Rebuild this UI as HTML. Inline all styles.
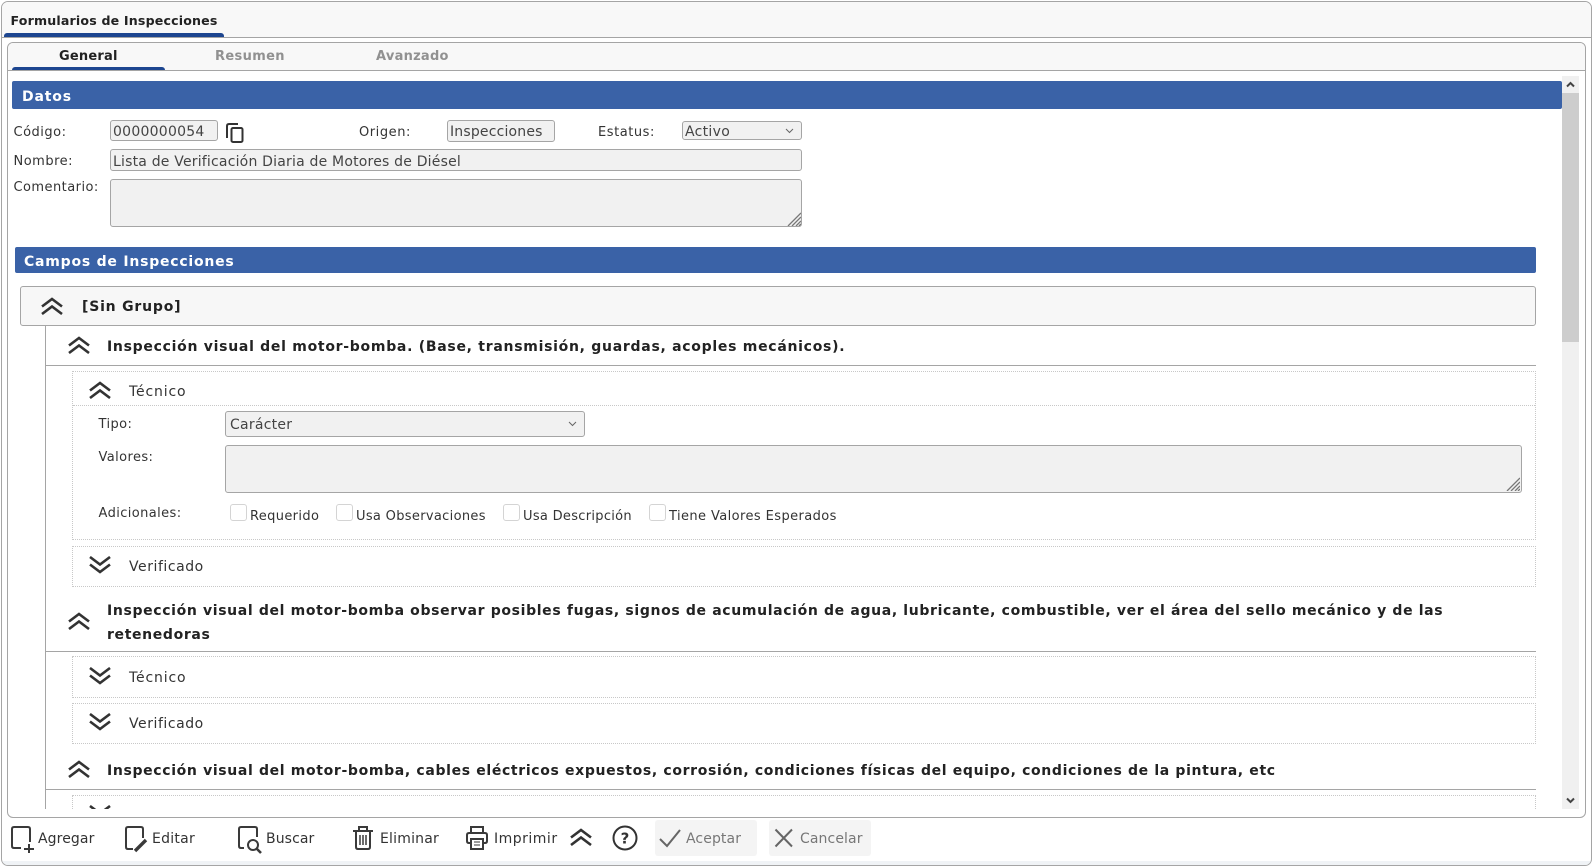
<!DOCTYPE html>
<html lang="es"><head><meta charset="utf-8"><title>Formularios de Inspecciones</title>
<style>
html,body{margin:0;padding:0;width:1593px;height:867px;overflow:hidden;background:#fff}
body{font-family:"DejaVu Sans",sans-serif;font-size:13px;color:#333;position:relative}
.a{position:absolute;box-sizing:border-box}
.t{position:absolute;white-space:nowrap;line-height:20px;height:20px;letter-spacing:.4px}
.b{font-weight:bold;color:#222}
.k{font-size:14px;letter-spacing:.1px}
.f{position:absolute;box-sizing:border-box;background:#f1f1f1;border:1px solid #a5a5a5;border-radius:3px;color:#444;font-size:14px;line-height:23px;padding-left:2px;white-space:nowrap;letter-spacing:.18px;overflow:hidden}
.d{position:absolute;box-sizing:border-box;border:1px dotted #c8c8c8;background:#fff}
.h{position:absolute;height:1px;background:#a5a5a5}
.bar{position:absolute;box-sizing:border-box;background:#3a62a7;color:#fff;font-weight:bold;border-radius:2px;white-space:nowrap}
svg{position:absolute;overflow:visible}
.ci{fill:none;stroke:#333;stroke-width:2.6}
.ic{fill:none;stroke:#3a3a3a;stroke-width:2}
.cb{position:absolute;box-sizing:border-box;width:17px;height:17px;border:1px solid #d4d4d4;border-radius:3px;background:#fff}
.rs{position:absolute;width:14px;height:14px}
</style></head><body>
<svg width="0" height="0" style="position:absolute"><defs>
<symbol id="up" viewBox="0 0 22 18"><path class="ci" d="M1 9.5 11 2 21 9.5M1 17 11 9.5 21 17"/></symbol>
<symbol id="dn" viewBox="0 0 22 18"><path class="ci" d="M1 1 11 8.5 21 1M1 8.5 11 16 21 8.5"/></symbol>
<symbol id="rz" viewBox="0 0 14 14"><path d="M1 14 14 1M5 14 14 5M9 14 14 9M12 14 14 12" fill="none" stroke="#777" stroke-width="1.3"/></symbol>
</defs></svg>

<!-- outer -->
<div class="a" style="left:1px;top:1px;width:1591px;height:865px;border:1px solid #a5a5a5;border-radius:7px;background:#fff;overflow:hidden">
  <div class="a" style="left:0;top:0;width:100%;height:36px;background:#f8f8f8;border-bottom:1px solid #a5a5a5"></div>
  <div class="a" style="left:0;bottom:0;width:100%;height:4px;background:#f0f3f6"></div>
</div>
<div class="t b" style="left:10.5px;top:11px;font-size:12.6px;letter-spacing:.17px">Formularios de Inspecciones</div>
<div class="a" style="left:4px;top:33px;width:220px;height:4px;background:#1d4690;border-radius:3px 3px 0 0"></div>

<!-- inner -->
<div class="a" style="left:7px;top:42px;width:1579px;height:776px;border:1px solid #a5a5a5;border-radius:6px;background:#fff;overflow:hidden">
  <div class="a" style="left:0;top:0;width:100%;height:28px;background:#f8f8f8;border-bottom:1px solid #a5a5a5"></div>
</div>
<div class="t b" style="left:59px;top:47px;font-size:13px;letter-spacing:.2px">General</div>
<div class="t b" style="left:215px;top:47px;font-size:13px;color:#919191;letter-spacing:.35px">Resumen</div>
<div class="t b" style="left:376px;top:47px;font-size:13px;color:#919191;letter-spacing:.25px">Avanzado</div>
<div class="a" style="left:12px;top:67px;width:153px;height:3px;background:#1d4690;border-radius:3px 3px 0 0"></div>

<!-- scrollbar -->
<div class="a" style="left:1562px;top:76px;width:17px;height:733px;background:#f0f0f0"></div>
<div class="a" style="left:1562px;top:93px;width:17px;height:249px;background:#cdcdcd"></div>
<svg style="left:1566px;top:81px" width="9" height="7"><path d="M1 5.5 4.5 2 8 5.5" fill="none" stroke="#444" stroke-width="2"/></svg>
<svg style="left:1566px;top:797px" width="9" height="7"><path d="M1 1.5 4.5 5 8 1.5" fill="none" stroke="#444" stroke-width="2"/></svg>

<!-- Datos -->
<div class="bar" style="left:12px;top:81px;width:1550px;height:28px;padding-left:10px;line-height:32px;font-size:14px;letter-spacing:.85px">Datos</div>
<div class="t" style="left:13.5px;top:123px;letter-spacing:.5px">Código:</div>
<div class="f" style="left:110px;top:120px;width:108px;height:21px;letter-spacing:.25px">0000000054</div>
<svg style="left:226px;top:123px" width="18" height="20" viewBox="0 0 18 20"><path d="M12 1H3Q1 1 1 3V15" fill="none" stroke="#333" stroke-width="2"/><rect x="5.5" y="5" width="11" height="14" rx="1.5" fill="none" stroke="#333" stroke-width="2"/></svg>
<div class="t" style="left:359px;top:123px;letter-spacing:.55px">Origen:</div>
<div class="f" style="left:447px;top:120px;width:108px;height:22px">Inspecciones</div>
<div class="t" style="left:598px;top:123px;letter-spacing:.55px">Estatus:</div>
<div class="f" style="left:682px;top:121px;width:120px;height:19px;line-height:21px;letter-spacing:.3px">Activo</div>
<svg style="left:785px;top:128px" width="9" height="6"><path d="M1 1 4.5 4.5 8 1" fill="none" stroke="#666" stroke-width="1"/></svg>
<div class="t" style="left:13.5px;top:152px;letter-spacing:.5px">Nombre:</div>
<div class="f" style="left:110px;top:149px;width:692px;height:22px;line-height:25px;letter-spacing:.2px">Lista de Verificación Diaria de Motores de Diésel</div>
<div class="t" style="left:13.5px;top:178px;letter-spacing:.45px">Comentario:</div>
<div class="f" style="left:110px;top:179px;width:692px;height:48px"></div>
<svg class="rs" style="left:787px;top:212px"><use href="#rz"/></svg>

<!-- Campos -->
<div class="bar" style="left:15px;top:247px;width:1521px;height:26px;padding-left:9px;line-height:30px;font-size:14px;letter-spacing:.78px">Campos de Inspecciones</div>
<div class="a" style="left:20px;top:286px;width:1516px;height:40px;background:#f7f7f7;border:1px solid #a5a5a5;border-radius:3px"></div>
<svg style="left:41px;top:297px" width="22" height="18"><use href="#up"/></svg>
<div class="t b" style="left:82px;top:297px;font-size:14px;letter-spacing:.8px">[Sin Grupo]</div>

<div class="a" style="left:45px;top:326px;width:1px;height:483px;background:#a5a5a5"></div>

<!-- Item 1 -->
<svg style="left:68px;top:336px" width="22" height="18"><use href="#up"/></svg>
<div class="t b" style="left:107px;top:337px;font-size:14px;letter-spacing:.72px">Inspección visual del motor-bomba. (Base, transmisión, guardas, acoples mecánicos).</div>
<div class="h" style="left:45px;top:365px;width:1491px"></div>

<div class="d" style="left:72px;top:371px;width:1464px;height:169px"></div>
<div class="a" style="left:73px;top:405px;width:1462px;border-top:1px dotted #c8c8c8"></div>
<svg style="left:89px;top:381px" width="22" height="18"><use href="#up"/></svg>
<div class="t" style="left:129px;top:382px;font-size:14px;letter-spacing:.85px">Técnico</div>
<div class="t" style="left:98.5px;top:415px">Tipo:</div>
<div class="f" style="left:225px;top:411px;width:360px;height:26px;line-height:27px;padding-left:4px;letter-spacing:.25px">Carácter</div>
<svg style="left:568px;top:421px" width="9" height="6"><path d="M1 1 4.5 4.5 8 1" fill="none" stroke="#666" stroke-width="1"/></svg>
<div class="t" style="left:98.5px;top:448px">Valores:</div>
<div class="f" style="left:225px;top:445px;width:1297px;height:48px"></div>
<svg class="rs" style="left:1506px;top:477px"><use href="#rz"/></svg>
<div class="t" style="left:98.5px;top:504px">Adicionales:</div>
<div class="cb" style="left:230px;top:504px"></div>
<div class="t" style="left:250px;top:507px;letter-spacing:.35px">Requerido</div>
<div class="cb" style="left:336px;top:504px"></div>
<div class="t" style="left:356px;top:507px;letter-spacing:.32px">Usa Observaciones</div>
<div class="cb" style="left:503px;top:504px"></div>
<div class="t" style="left:523px;top:507px;letter-spacing:.3px">Usa Descripción</div>
<div class="cb" style="left:649px;top:504px"></div>
<div class="t" style="left:669px;top:507px;letter-spacing:.41px">Tiene Valores Esperados</div>

<div class="d" style="left:72px;top:546px;width:1464px;height:41px"></div>
<svg style="left:89px;top:556px" width="22" height="18"><use href="#dn"/></svg>
<div class="t" style="left:129px;top:557px;font-size:14px;letter-spacing:.55px">Verificado</div>

<!-- Item 2 -->
<svg style="left:68px;top:612px" width="22" height="18"><use href="#up"/></svg>
<div class="t b" style="left:107px;top:601px;font-size:14px;letter-spacing:.646px">Inspección visual del motor-bomba observar posibles fugas, signos de acumulación de agua, lubricante, combustible, ver el área del sello mecánico y de las</div>
<div class="t b" style="left:107px;top:625px;font-size:14px;letter-spacing:.646px">retenedoras</div>
<div class="h" style="left:45px;top:651px;width:1491px"></div>
<div class="d" style="left:72px;top:656px;width:1464px;height:42px"></div>
<svg style="left:89px;top:667px" width="22" height="18"><use href="#dn"/></svg>
<div class="t" style="left:129px;top:668px;font-size:14px;letter-spacing:.85px">Técnico</div>
<div class="d" style="left:72px;top:703px;width:1464px;height:41px"></div>
<svg style="left:89px;top:713px" width="22" height="18"><use href="#dn"/></svg>
<div class="t" style="left:129px;top:714px;font-size:14px;letter-spacing:.55px">Verificado</div>

<!-- Item 3 -->
<svg style="left:68px;top:760px" width="22" height="18"><use href="#up"/></svg>
<div class="t b" style="left:107px;top:761px;font-size:14px;letter-spacing:.653px">Inspección visual del motor-bomba, cables eléctricos expuestos, corrosión, condiciones físicas del equipo, condiciones de la pintura, etc</div>
<div class="h" style="left:45px;top:789px;width:1491px"></div>
<div class="a" style="left:72px;top:795px;width:1464px;height:14px;border:1px dotted #c8c8c8;border-bottom:0"></div>
<div class="a" style="left:89px;top:805px;width:22px;height:4px;overflow:hidden"><svg style="left:0;top:0" width="22" height="18"><use href="#dn"/></svg></div>

<!-- footer -->
<svg style="left:10px;top:825px" width="25" height="28" viewBox="0 0 25 28"><path class="ic" d="M11 23H4Q2 23 2 21V4Q2 2 4 2H18Q20 2 20 4V17"/><path d="M14 24H24M19 19V28" fill="none" stroke="#3a3a3a" stroke-width="2"/></svg>
<div class="t k" style="left:38px;top:829px">Agregar</div>
<svg style="left:124px;top:825px" width="25" height="28" viewBox="0 0 25 28"><path class="ic" d="M9 24H4Q2 24 2 22V4Q2 2 4 2H17Q19 2 19 4V13"/><path d="M11 26 22 15" fill="none" stroke="#3a3a3a" stroke-width="3.4"/></svg>
<div class="t k" style="left:152px;top:829px;letter-spacing:.25px">Editar</div>
<svg style="left:238px;top:825px" width="25" height="28" viewBox="0 0 25 28"><path class="ic" d="M6 23H3Q1 23 1 21V4Q1 2 3 2H17Q19 2 19 4V12"/><circle cx="15" cy="20" r="5" class="ic" stroke-width="2"/><path d="M19 24 23 28" fill="none" stroke="#3a3a3a" stroke-width="2.6"/></svg>
<div class="t k" style="left:266px;top:829px">Buscar</div>
<svg style="left:352px;top:825px" width="22" height="26" viewBox="0 0 22 26"><path class="ic" d="M1 6H21M7 5V2H15V5M4 7V22Q4 24 6 24H16Q18 24 18 22V7" stroke-width="1.7"/><path d="M8 10V20M11 10V20M14 10V20" fill="none" stroke="#3a3a3a" stroke-width="1.5"/></svg>
<div class="t k" style="left:380px;top:829px;letter-spacing:.2px">Eliminar</div>
<svg style="left:466px;top:825px" width="22" height="26" viewBox="0 0 22 26"><path class="ic" d="M5 8V2H17V8M5 18H3Q1 18 1 16V10Q1 8 3 8H19Q21 8 21 10V16Q21 18 19 18H17M5 14H17V24H5Z" stroke-width="1.7"/><path d="M8 17H14M8 20H14" stroke="#3a3a3a" stroke-width="1"/></svg>
<div class="t k" style="left:494px;top:829px;letter-spacing:.5px">Imprimir</div>
<svg style="left:570px;top:828px" width="22" height="18"><use href="#up"/></svg>
<svg style="left:612px;top:825px" width="26" height="26" viewBox="0 0 26 26"><circle cx="13" cy="13" r="11.5" fill="none" stroke="#333" stroke-width="2"/><text x="13" y="18.5" font-size="15" font-weight="bold" text-anchor="middle" fill="#333" font-family="DejaVu Sans">?</text></svg>
<div class="a" style="left:655px;top:820px;width:102px;height:36px;background:#f4f4f4;border-radius:3px"></div>
<svg style="left:659px;top:828px" width="22" height="20" viewBox="0 0 22 20"><path d="M1 11 8 18 21 2" fill="none" stroke="#666" stroke-width="2"/></svg>
<div class="t k" style="left:686px;top:829px;color:#777">Aceptar</div>
<div class="a" style="left:769px;top:820px;width:102px;height:36px;background:#f4f4f4;border-radius:3px"></div>
<svg style="left:774px;top:828px" width="20" height="20" viewBox="0 0 20 20"><path d="M1.5 1.5 18 18.5M18 1.5 1.5 18.5" fill="none" stroke="#666" stroke-width="2"/></svg>
<div class="t k" style="left:800px;top:829px;color:#777">Cancelar</div>
</body></html>
